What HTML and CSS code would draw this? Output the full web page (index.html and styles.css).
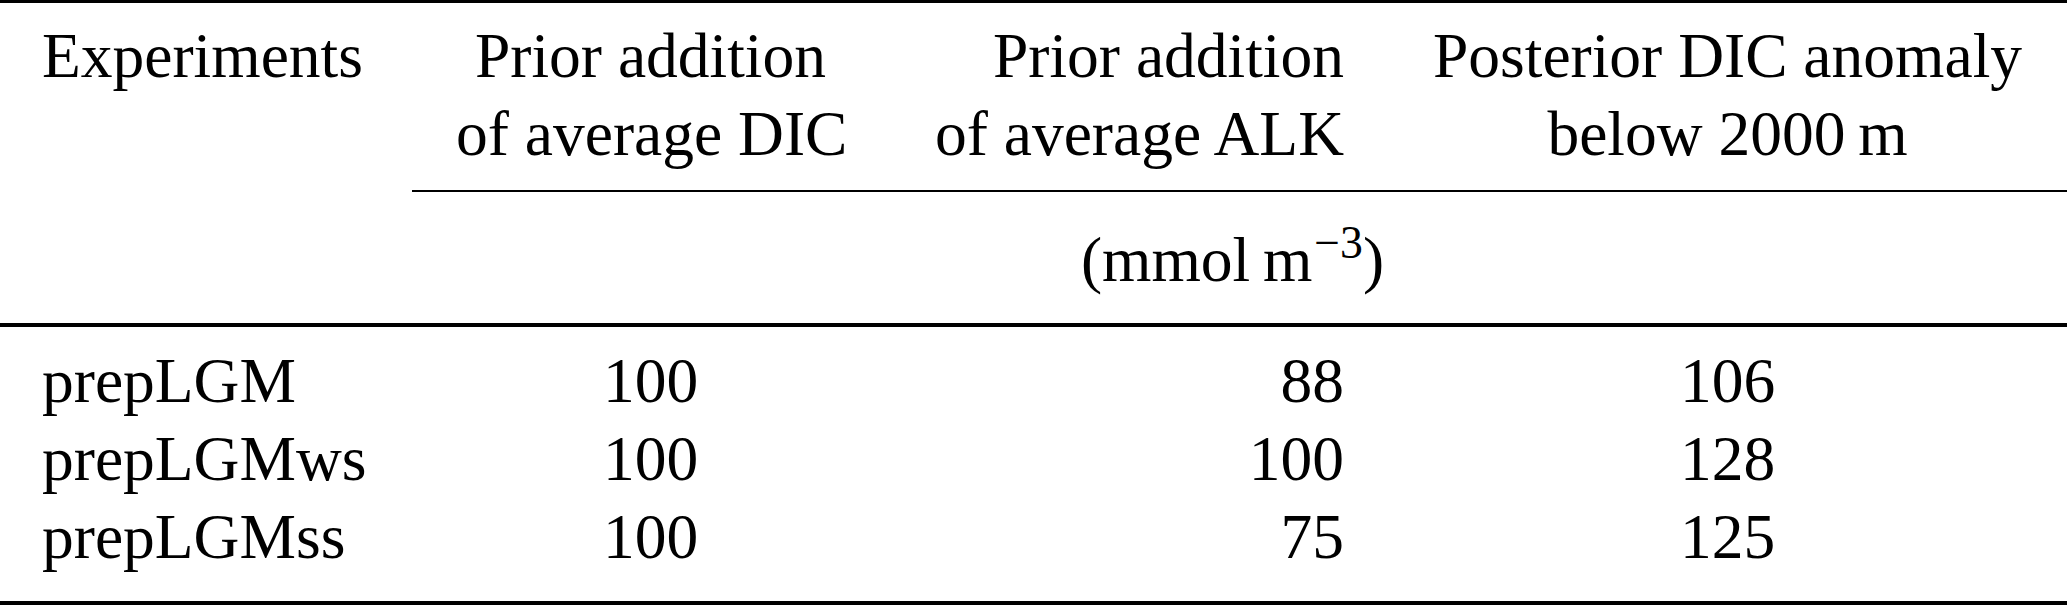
FILE: index.html
```html
<!DOCTYPE html>
<html lang="en">
<head>
    <meta charset="UTF-8">
    <title>Experiments – prior additions and posterior DIC anomaly</title>
    <link rel="stylesheet" href="styles.css">
</head>
<body>
    <div class="tbl">
        <div class="row head">
            <div class="cell left">Experiments</div>
            <div class="cell center">Prior addition<br>of average DIC</div>
            <div class="cell right">Prior addition<br>of average ALK</div>
            <div class="cell center">Posterior DIC anomaly<br>below 2000&thinsp;m</div>
        </div>

        <div class="row units">
            <div class="cell center span">(mmol&thinsp;m<sup>−3</sup>)</div>
        </div>

        <div class="body">
            <div class="row">
                <div class="cell left">prepLGM</div>
                <div class="cell center">100</div>
                <div class="cell right">88</div>
                <div class="cell center">106</div>
            </div>
            <div class="row">
                <div class="cell left">prepLGMws</div>
                <div class="cell center">100</div>
                <div class="cell right">100</div>
                <div class="cell center">128</div>
            </div>
            <div class="row">
                <div class="cell left">prepLGMss</div>
                <div class="cell center">100</div>
                <div class="cell right">75</div>
                <div class="cell center">125</div>
            </div>
        </div>
    </div>
</body>
</html>
```

FILE: styles.css
```css
* {
    margin: 0;
    padding: 0;
    box-sizing: border-box;
}

html, body {
    width: 100%;
    height: 100%;
    overflow: hidden;
    background: #fff;
}

body {
    font-family: "Liberation Serif", serif;
    font-size: 63.5px;
    line-height: 78px;
    color: #000;
}

.tbl {
    width: 2067px;
    border-top: 3px solid #000;
    border-bottom: 4px solid #000;
}

.row {
    display: grid;
    grid-template-columns: 412px 477px 499px 1fr;
}

.cell {
    padding: 0 44px;
    white-space: nowrap;
    font-family: "Liberation Serif", serif;
}

.cell.left {
    padding-left: 42px;
    text-align: left;
}

.cell.center {
    text-align: center;
}

.cell.right {
    text-align: right;
}

.head {
    padding: 14px 0 17px;
}

/* partial rule under the three value columns */
.units .span {
    grid-column: 2 / -1;
    border-top: 2px solid #000;
    padding-top: 29px;
    padding-bottom: 24px;
    padding-right: 58px;
}

.units {
    border-bottom: 4px solid #000;
}

.units sup {
    font-size: 0.72em;
    line-height: 0;
    vertical-align: 0.5em;
    margin-left: 2px;
}

.body {
    padding: 15px 0 25px;
}
```
